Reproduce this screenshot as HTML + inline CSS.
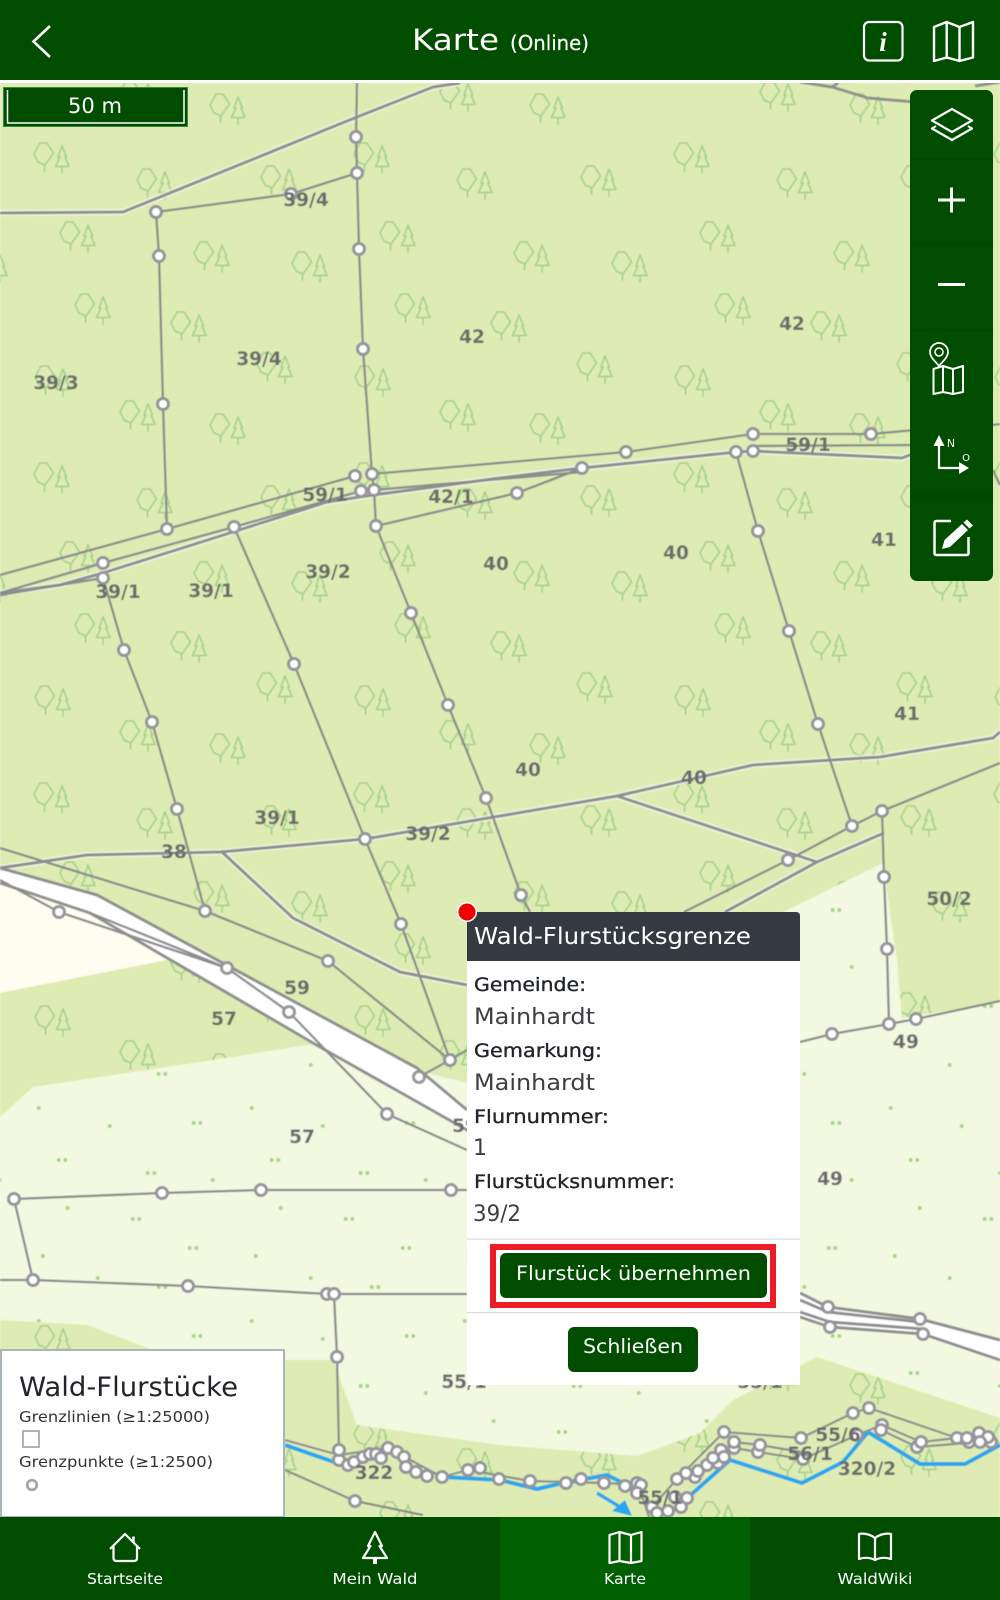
<!DOCTYPE html>
<html lang="de"><head><meta charset="utf-8"><title>Karte</title>
<style>
html,body{margin:0;padding:0;background:#fff}
svg{display:block}
text{font-family:"DejaVu Sans","Liberation Sans",sans-serif}
.lb text{font-weight:bold;font-size:18.5px;fill:#6c6c6c;text-anchor:middle}
.pt{fill:#212529;font-size:19px;stroke:#212529;stroke-width:.35}
.pv{fill:#3c3f42;font-size:22px}
.nv{fill:#fff;font-size:15px;text-anchor:middle}
</style></head>
<body>
<svg width="1000" height="1600" viewBox="0 0 1000 1600" xmlns="http://www.w3.org/2000/svg">
<defs>
<g id="t" fill="none" stroke="#a9d38c" stroke-width="1.800" stroke-linejoin="round" stroke-linecap="round">
<path d="M-18-3-12-14H-5L1.500-4-7 8-14 5Z M-7.500 8V14"/>
<path d="M10-11 6 0H8L3.500 9.500H17L13 0H14.500Z M10 9.500V16"/>
</g>
<pattern id="tp" patternUnits="userSpaceOnUse" width="320" height="320">
<use href="#t" x="52" y="157"/><use href="#t" x="138" y="95"/><use href="#t" x="228" y="108"/><use href="#t" x="155" y="183"/><use href="#t" x="279" y="180"/><use href="#t" x="78" y="236"/><use href="#t" x="212" y="256"/><use href="#t" x="310" y="266"/><use href="#t" x="-10" y="266"/><use href="#t" x="93" y="308"/><use href="#t" x="93" y="-12"/><use href="#t" x="189" y="6"/><use href="#t" x="189" y="326"/><use href="#t" x="275" y="47"/><use href="#t" x="53" y="60"/>
</pattern>
<pattern id="dp" patternUnits="userSpaceOnUse" width="213" height="213">
<path fill="none" stroke="#a6d588" stroke-width="4" stroke-linecap="round" stroke-dasharray="0 6.600" d="M109.700 61h6.600M193.700 58h6.600M58.700 95h6.600M147.700 108h6.600M-.3 115h6.600M212.700 115h6.600M67.700 143h6.600M132.700 154h6.600M189.700 183h6.600M42.700 191h6.600M97.700 0h6.600M97.700 213h6.600M158.700 9h6.600M38.700 43h6.600"/>
</pattern>
<filter id="b" x="0" y="0" width="100%" height="100%"><feGaussianBlur stdDeviation=".55"/></filter>
<clipPath id="mc"><rect x="0" y="83" width="1000" height="1434"/></clipPath>
</defs>

<rect width="1000" height="1600" fill="#fff"/>
<g clip-path="url(#mc)">
<g filter="url(#b)">
<rect y="80" width="1000" height="1440" fill="#deecb3"/>
<rect y="80" width="1000" height="1440" fill="url(#tp)"/>
<path id="la" fill="#f3f8e0" d="M0 1117 33 1087 213 1060 313 1044 467 1083 560 1000 767 920 883 863 897 960 902 1018 1000 1002V1418L817 1357 733 1400 700 1433 637 1456 500 1445 357 1425 333 1360 287 1360 153 1350 87 1325 0 1320Z"/>
<path fill="url(#dp)" d="M0 1117 33 1087 213 1060 313 1044 467 1083 560 1000 767 920 883 863 897 960 902 1018 1000 1002V1418L817 1357 733 1400 700 1433 637 1456 500 1445 357 1425 333 1360 287 1360 153 1350 87 1325 0 1320Z"/>
<path fill="#fffdf0" d="M0 883 90 913 167 960 0 993Z"/>
<path fill="#fff" d="M0 868 97 895 417 1068 467 1110V1130L320 1047 90 913 0 883Z"/>
<path fill="#fff" d="M800 1293 828 1307 920 1319 1000 1340V1360L923 1334 830 1327 800 1317Z"/>

<!-- halo + thick boundaries -->
<g fill="none" stroke-linejoin="round">
<g stroke="#f4f6ea" stroke-width="6" opacity=".8">
<path d="M0 213 123 212 357 117 433 87 460 83"/>
<path d="M0 593 60 585 103 573 233 532 327 502 373 495 500 478 582 468 737 452 753 451 902 458 915 453"/>
<path d="M0 868 87 855 220 852 365 839 500 816 617 796 753 765 880 757 993 738 1000 732"/>
<path d="M617 796 817 862M222 852 293 918 400 972 467 985M725 912 817 862 884 833"/>
</g>
<g stroke="#8f8f8f" stroke-width="3">
<path d="M0 213 123 212 357 117 433 87 460 83"/>
<path d="M800 82 832 87 868 98 915 102M832 87 838 83M975 86 1000 82"/>
<path d="M0 593 60 585 103 573 233 532 327 502 373 495 500 478 582 468 737 452 753 451 902 458 915 453"/>
<path d="M0 868 87 855 220 852 365 839 500 816 617 796 753 765 880 757 993 738 1000 732"/>
<path d="M617 796 817 862M222 852 293 918 400 972 467 985M725 912 817 862 884 833"/>
<path d="M0 868 97 895 417 1068 467 1110M0 883 90 913 320 1047 467 1130"/>
<path d="M800 1293 828 1307 920 1319 1000 1340M800 1317 830 1327 923 1334 1000 1360"/>
<path d="M800 1300 828 1312 920 1322M800 1312 830 1322 923 1329"/>
</g>
<g stroke="#8c8c8c" stroke-width="2.300">
<path d="M357 83 356 137 357 173 359 249 363 349 372 474 374 490 376 526 411 613 448 705 486 798 521 895 530 912"/>
<path d="M156 212 159 256 163 404 167 529M156 212 291 194 357 173"/>
<path d="M103 578 124 650 152 722 177 809 205 911"/>
<path d="M234 527 294 664 365 839 401 924 450 1060"/>
<path d="M736 452 758 531 789 631 818 724 852 826"/>
<path d="M0 575 167 529 355 476M0 593 103 563 234 527 361 491 374 490M0 595 103 578"/>
<path d="M372 474 626 452 753 434 871 434 915 430M985 426 1000 424M753 446 915 445"/>
<path d="M376 526 517 493 582 468M374 490 582 472"/>
<path d="M684 912 788 860 852 826 882 811 1000 763M993 470 1000 485"/>
<path d="M882 811 884 877 887 949 889 1024"/>
<path d="M800 1042 832 1034 889 1024 916 1019 1000 1001"/>
<path d="M0 848 205 911 328 961 450 1060M419 1077 450 1060 467 1050"/>
<path d="M0 880 59 912 227 968M90 913 227 968 289 1012 387 1114 467 1150"/>
<path d="M14 1199 162 1193 261 1190 467 1190M14 1199 33 1280M0 1280 33 1280 188 1286 327 1294 467 1294M334 1294 337 1357 339 1450"/>
<path d="M285 1470 355 1501 423 1515"/>
</g>
<path stroke="#2aa7ee" stroke-width="4" d="M285 1445 337 1463M443 1477 500 1480 537 1489 563 1483 607 1475 627 1485 643 1495M677 1507 693 1493 730 1460 802 1483 843 1462 868 1432 920 1464 965 1464 1000 1445"/>
<path stroke="#2aa7ee" stroke-width="3.500" d="M597 1493 625 1510"/>
<path fill="#2aa7ee" d="M632 1516 612 1511 625 1500Z"/>
<g stroke="#8f8f8f" stroke-width="2.200">
<path d="M285 1440 339 1455 388 1448 442 1477 468 1470 530 1481 604 1483 641 1485"/>
<path d="M724 1432 801 1438 853 1413 869 1408 957 1438 990 1435"/>
<path d="M734 1442 760 1445 801 1452M734 1448 758 1452 803 1459 857 1435 882 1425 921 1442 957 1438M881 1430 917 1447 980 1442"/>
<path d="M652 1507 677 1479 724 1432M650 1520 640 1490"/>
</g>
</g>

<g fill="#fff" stroke="#94949a" stroke-width="3">
<circle cx="356" cy="137" r="5.500"/><circle cx="357" cy="173" r="5.500"/><circle cx="359" cy="249" r="5.500"/><circle cx="363" cy="349" r="5.500"/><circle cx="156" cy="212" r="5.500"/><circle cx="159" cy="256" r="5.500"/><circle cx="291" cy="194" r="5.500"/><circle cx="163" cy="404" r="5.500"/>
<circle cx="167" cy="529" r="5.500"/><circle cx="234" cy="527" r="5.500"/><circle cx="355" cy="476" r="5.500"/><circle cx="372" cy="474" r="5.500"/><circle cx="361" cy="491" r="5.500"/><circle cx="374" cy="490" r="5.500"/><circle cx="376" cy="526" r="5.500"/><circle cx="103" cy="563" r="5.500"/><circle cx="103" cy="578" r="5.500"/>
<circle cx="517" cy="493" r="5.500"/><circle cx="582" cy="468" r="5.500"/><circle cx="626" cy="452" r="5.500"/><circle cx="736" cy="452" r="5.500"/><circle cx="753" cy="434" r="5.500"/><circle cx="753" cy="451" r="5.500"/><circle cx="871" cy="434" r="5.500"/>
<circle cx="411" cy="613" r="5.500"/><circle cx="448" cy="705" r="5.500"/><circle cx="486" cy="798" r="5.500"/><circle cx="521" cy="895" r="5.500"/><circle cx="124" cy="650" r="5.500"/><circle cx="152" cy="722" r="5.500"/><circle cx="177" cy="809" r="5.500"/><circle cx="205" cy="911" r="5.500"/><circle cx="294" cy="664" r="5.500"/><circle cx="365" cy="839" r="5.500"/><circle cx="401" cy="924" r="5.500"/><circle cx="450" cy="1060" r="5.500"/>
<circle cx="758" cy="531" r="5.500"/><circle cx="789" cy="631" r="5.500"/><circle cx="818" cy="724" r="5.500"/><circle cx="852" cy="826" r="5.500"/><circle cx="788" cy="860" r="5.500"/><circle cx="882" cy="811" r="5.500"/><circle cx="884" cy="877" r="5.500"/><circle cx="887" cy="949" r="5.500"/><circle cx="889" cy="1024" r="5.500"/><circle cx="916" cy="1019" r="5.500"/><circle cx="832" cy="1034" r="5.500"/>
<circle cx="59" cy="912" r="5.500"/><circle cx="227" cy="968" r="5.500"/><circle cx="289" cy="1012" r="5.500"/><circle cx="328" cy="961" r="5.500"/><circle cx="419" cy="1077" r="5.500"/><circle cx="387" cy="1114" r="5.500"/>
<circle cx="14" cy="1199" r="5.500"/><circle cx="162" cy="1193" r="5.500"/><circle cx="261" cy="1190" r="5.500"/><circle cx="451" cy="1190" r="5.500"/><circle cx="33" cy="1280" r="5.500"/><circle cx="188" cy="1286" r="5.500"/><circle cx="327" cy="1294" r="5.500"/><circle cx="334" cy="1294" r="5.500"/><circle cx="337" cy="1357" r="5.500"/>
<circle cx="828" cy="1307" r="5.500"/><circle cx="830" cy="1327" r="5.500"/><circle cx="920" cy="1319" r="5.500"/><circle cx="923" cy="1334" r="5.500"/>
<circle cx="355" cy="1501" r="5.500"/>
<circle cx="339" cy="1460" r="5.500"/><circle cx="339" cy="1450" r="5.500"/><circle cx="348" cy="1465" r="5.500"/><circle cx="354" cy="1462" r="5.500"/><circle cx="363" cy="1457" r="5.500"/><circle cx="370" cy="1454" r="5.500"/><circle cx="376" cy="1454" r="5.500"/><circle cx="381" cy="1458" r="5.500"/><circle cx="388" cy="1448" r="5.500"/><circle cx="397" cy="1452" r="5.500"/><circle cx="404" cy="1457" r="5.500"/><circle cx="406" cy="1467" r="5.500"/><circle cx="416" cy="1472" r="5.500"/><circle cx="427" cy="1476" r="5.500"/><circle cx="442" cy="1477" r="5.500"/><circle cx="468" cy="1470" r="5.500"/><circle cx="480" cy="1468" r="5.500"/><circle cx="499" cy="1479" r="5.500"/>
<circle cx="530" cy="1481" r="5.500"/><circle cx="566" cy="1483" r="5.500"/><circle cx="581" cy="1479" r="5.500"/><circle cx="604" cy="1483" r="5.500"/><circle cx="625" cy="1486" r="5.500"/><circle cx="637" cy="1483" r="5.500"/><circle cx="641" cy="1485" r="5.500"/><circle cx="637" cy="1493" r="5.500"/><circle cx="652" cy="1507" r="5.500"/><circle cx="657" cy="1513" r="5.500"/><circle cx="668" cy="1511" r="5.500"/><circle cx="681" cy="1507" r="5.500"/><circle cx="675" cy="1497" r="5.500"/><circle cx="687" cy="1498" r="5.500"/><circle cx="677" cy="1479" r="5.500"/><circle cx="695" cy="1477" r="5.500"/><circle cx="686" cy="1473" r="5.500"/><circle cx="698" cy="1471" r="5.500"/><circle cx="718" cy="1463" r="5.500"/><circle cx="707" cy="1465" r="5.500"/><circle cx="713" cy="1458" r="5.500"/><circle cx="721" cy="1450" r="5.500"/><circle cx="724" cy="1457" r="5.500"/><circle cx="734" cy="1448" r="5.500"/><circle cx="734" cy="1442" r="5.500"/><circle cx="724" cy="1432" r="5.500"/><circle cx="758" cy="1452" r="5.500"/><circle cx="760" cy="1445" r="5.500"/><circle cx="803" cy="1459" r="5.500"/><circle cx="801" cy="1438" r="5.500"/><circle cx="853" cy="1413" r="5.500"/><circle cx="869" cy="1408" r="5.500"/><circle cx="857" cy="1435" r="5.500"/><circle cx="882" cy="1425" r="5.500"/><circle cx="881" cy="1430" r="5.500"/><circle cx="917" cy="1447" r="5.500"/><circle cx="921" cy="1442" r="5.500"/><circle cx="957" cy="1438" r="5.500"/><circle cx="969" cy="1442" r="5.500"/><circle cx="967" cy="1438" r="5.500"/><circle cx="979" cy="1433" r="5.500"/><circle cx="991" cy="1442" r="5.500"/><circle cx="988" cy="1437" r="5.500"/><circle cx="980" cy="1442" r="5.500"/>
</g>

<g class="lb">
<text x="306" y="206">39/4</text><text x="472" y="343">42</text><text x="259" y="365">39/4</text><text x="56" y="389">39/3</text><text x="792" y="330">42</text>
<text x="808" y="451">59/1</text><text x="325" y="501">59/1</text><text x="451" y="503">42/1</text><text x="118" y="598">39/1</text><text x="211" y="597">39/1</text><text x="328" y="578">39/2</text>
<text x="496" y="570">40</text><text x="676" y="559">40</text><text x="884" y="546">41</text><text x="907" y="720">41</text><text x="528" y="776">40</text><text x="694" y="784">40</text>
<text x="277" y="824">39/1</text><text x="428" y="840">39/2</text><text x="174" y="858">38</text><text x="297" y="994">59</text><text x="224" y="1025">57</text><text x="302" y="1143">57</text><text x="465" y="1132">59</text>
<text x="949" y="905">50/2</text><text x="906" y="1048">49</text><text x="830" y="1185">49</text><text x="464" y="1388">55/1</text><text x="760" y="1388">55/1</text><text x="374" y="1479">322</text><text x="838" y="1441">55/6</text><text x="810" y="1460">56/1</text><text x="867" y="1475">320/2</text><text x="660" y="1504">55/1</text>
</g>
</g>
</g>

<!-- scale -->
<rect x="3.500" y="87.500" width="184" height="39" fill="#004d00" stroke="#3c8a3c" stroke-width="1"/>
<path d="M7.500 90V123H184V90" fill="none" stroke="#fff" stroke-width="1.500"/>
<text x="95" y="113" fill="#fff" font-size="21" text-anchor="middle" textLength="54" lengthAdjust="spacingAndGlyphs">50 m</text>

<!-- toolbar -->
<rect x="910" y="90" width="83" height="491" rx="7" fill="#004d00"/>
<path d="M910 159H993M910 244H993M910 330H993M910 496H993" stroke="#004300" stroke-width="1"/>
<g fill="none" stroke="#fff" stroke-linejoin="round">
<path stroke-width="2.200" d="M952 109 972 120.500 952 132 932 120.500ZM936 126 932 128.500 952 140 972 128.500 968 126"/>
<path stroke-width="3" d="M951.500 187.500V212.500M938 200H965M938 284.500H965"/>
<path stroke-width="1.800" d="M939 366C934 360 930 357 930 352A9 9 0 0 1 948 352C948 357 944 360 939 366Z"/>
<circle cx="939" cy="352" r="4" stroke-width="1.600"/>
<path stroke-width="2" d="M933.500 369 943 366 953 369 963 366V392L953 394 943 392 933.500 394ZM943 366V392M953 369V394"/>
<path stroke-width="2.200" d="M939 446V468H960"/>
<path stroke-width="2.500" stroke-linejoin="round" d="M951 521H936.500Q934.500 521 934.500 523V553Q934.500 555 936.500 555H966.500Q968.500 555 968.500 553V537"/>
</g>
<path fill="#fff" d="M939 446 933.500 446 939 435 944.500 446ZM959 462V474L969 468Z"/>
<path fill="#fff" d="M942 549 944.500 540 962 524 968 530 950 547ZM963.500 522.500 967 519.500 973 525.500 969.500 528.500Z"/>
<text x="951" y="447" fill="#fff" font-size="11" text-anchor="middle">N</text>
<text x="966" y="461" fill="#fff" font-size="10" text-anchor="middle">O</text>

<!-- header -->
<rect width="1000" height="80" fill="#004d00"/>
<rect y="80" width="1000" height="3" fill="#fff"/>
<path d="M50 26 33.500 41.500 50 57" fill="none" stroke="#fff" stroke-width="2.600" stroke-linejoin="miter"/>
<text x="412" y="50" fill="#fff" font-size="29" textLength="87" lengthAdjust="spacingAndGlyphs">Karte</text>
<text x="510" y="50" fill="#fff" font-size="20" textLength="79" lengthAdjust="spacingAndGlyphs" stroke="#fff" stroke-width=".2">(Online)</text>
<rect x="864" y="22" width="38.500" height="38.500" rx="5" fill="none" stroke="#fff" stroke-width="2.200"/>
<text x="883" y="51" fill="#fff" font-size="27" font-style="italic" font-weight="bold" text-anchor="middle" style="font-family:'Liberation Serif',serif">i</text>
<path fill="none" stroke="#fff" stroke-width="2.400" stroke-linejoin="round" d="M934 27 946.700 22 959.500 27 973 22V57.500L959.500 61 946.700 57.500 934 61ZM946.700 22V57.500M959.500 27V61"/>

<!-- legend -->
<rect x="1" y="1350" width="283" height="167" fill="#fff" stroke="#a9b5bc" stroke-width="2"/>
<text x="19" y="1396" fill="#212529" font-size="27" textLength="219" lengthAdjust="spacingAndGlyphs">Wald-Flurstücke</text>
<text x="19" y="1422" fill="#333" font-size="15.500" textLength="191" lengthAdjust="spacingAndGlyphs">Grenzlinien (≥1:25000)</text>
<rect x="23" y="1431" width="16" height="16" fill="#fff" stroke="#aaa" stroke-width="1.800"/>
<text x="19" y="1467" fill="#333" font-size="15.500" textLength="194" lengthAdjust="spacingAndGlyphs">Grenzpunkte (≥1:2500)</text>
<circle cx="32" cy="1485" r="4.800" fill="#fff" stroke="#a3a3a3" stroke-width="2.600"/>

<!-- popup -->
<path d="M467 961V912H796Q800 912 800 916V961Z" fill="#343a40"/>
<rect x="467" y="961" width="333" height="424" fill="#fff"/>
<circle cx="467" cy="912" r="9.300" fill="#f00000" stroke="#fff" stroke-width="1.500"/>
<text x="474" y="944" fill="#fff" font-size="23" textLength="277" lengthAdjust="spacingAndGlyphs">Wald-Flurstücksgrenze</text>
<text class="pt" x="474" y="991" textLength="112" lengthAdjust="spacingAndGlyphs">Gemeinde:</text>
<text class="pv" x="474" y="1024" textLength="121" lengthAdjust="spacingAndGlyphs">Mainhardt</text>
<text class="pt" x="474" y="1057" textLength="128" lengthAdjust="spacingAndGlyphs">Gemarkung:</text>
<text class="pv" x="474" y="1090" textLength="121" lengthAdjust="spacingAndGlyphs">Mainhardt</text>
<text class="pt" x="474" y="1123" textLength="135" lengthAdjust="spacingAndGlyphs">Flurnummer:</text>
<text class="pv" x="473" y="1155">1</text>
<text class="pt" x="474" y="1188" textLength="201" lengthAdjust="spacingAndGlyphs">Flurstücksnummer:</text>
<text class="pv" x="473" y="1221" textLength="48" lengthAdjust="spacingAndGlyphs">39/2</text>
<rect x="467" y="1238.500" width="333" height="1.200" fill="#dcdcdc"/>
<rect x="467" y="1312" width="333" height="1.200" fill="#dcdcdc"/>
<rect x="493" y="1247" width="280" height="58" fill="#fff" stroke="#ed1c24" stroke-width="6"/>
<rect x="500" y="1253" width="267" height="45" rx="6" fill="#004d00"/>
<text x="516" y="1280" fill="#fff" font-size="19.500" textLength="235" lengthAdjust="spacingAndGlyphs">Flurstück übernehmen</text>
<rect x="568" y="1327" width="130" height="45" rx="6" fill="#004d00"/>
<text x="583" y="1353" fill="#fff" font-size="19.500" textLength="100" lengthAdjust="spacingAndGlyphs">Schließen</text>

<!-- bottom nav -->
<rect y="1517" width="1000" height="83" fill="#004d00"/>
<rect x="500" y="1517" width="250" height="83" fill="#005f00"/>
<g fill="none" stroke="#fff" stroke-width="2.200" stroke-linejoin="round">
<path d="M110 1549 125 1534 140 1549M113.500 1546V1558Q113.500 1561 116.500 1561H134Q137 1561 137 1558V1546"/>
<path d="M133.500 1536.500V1543" stroke-width="2.500"/>
<path d="M375 1532 368 1546H370.500L363 1558H387L379.500 1546H382Z"/>
<path d="M375 1558V1564" stroke-width="4"/>
<path d="M609.500 1535 619.500 1532 631 1535 641.500 1532V1561L631 1563 619.500 1561 609.500 1563ZM619.500 1532V1561M631 1535V1563"/>
<path d="M875 1538C870 1534 863 1533 859 1534V1559C865 1557 871 1558 875 1560C879 1558 885 1557 891 1559V1534C887 1533 880 1534 875 1538V1560"/>
</g>
<text class="nv" x="125" y="1584" textLength="76" lengthAdjust="spacingAndGlyphs">Startseite</text>
<text class="nv" x="375" y="1584" textLength="85" lengthAdjust="spacingAndGlyphs">Mein Wald</text>
<text class="nv" x="625" y="1584" textLength="42" lengthAdjust="spacingAndGlyphs">Karte</text>
<text class="nv" x="875" y="1584" textLength="75" lengthAdjust="spacingAndGlyphs">WaldWiki</text>
</svg>
</body></html>
